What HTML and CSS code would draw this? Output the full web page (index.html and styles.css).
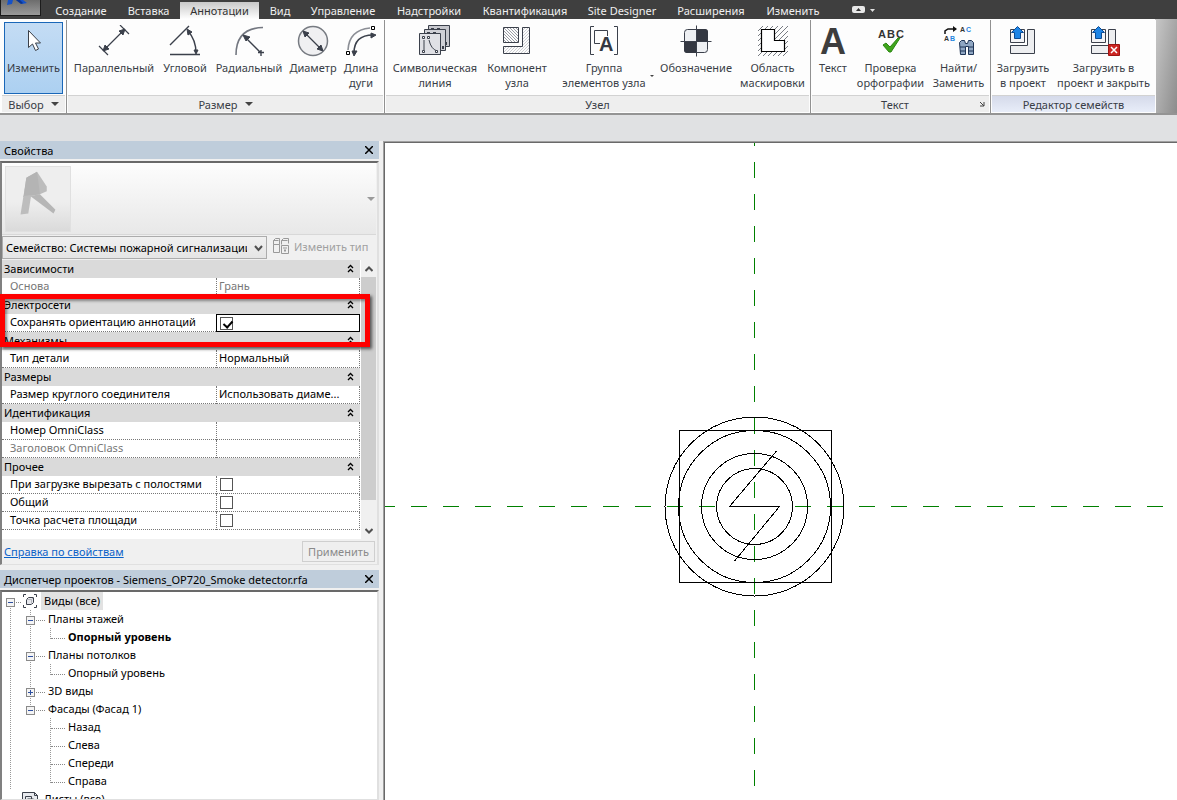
FILE: index.html
```html
<!DOCTYPE html>
<html lang="ru">
<head>
<meta charset="utf-8">
<title>Siemens_OP720_Smoke detector.rfa</title>
<link rel="stylesheet" href="styles.css">
</head>
<body>
<div class="app">
  <header class="topbar">
    <button class="app-button" aria-label="Меню приложения">
      <svg width="39" height="15" viewBox="0 0 39 15"><path d="M7 0h5l-1 4-5 1zM15 0h7l4 3-5 1z" fill="#1652c8"/><path d="M15 0h4l3 3-2 1z" fill="#0b3592"/></svg>
    </button>
    <nav class="tabs">
      <button class="tab">Создание</button>
      <button class="tab">Вставка</button>
      <button class="tab tab-active">Аннотации</button>
      <button class="tab">Вид</button>
      <button class="tab">Управление</button>
      <button class="tab">Надстройки</button>
      <button class="tab">Квантификация</button>
      <button class="tab">Site Designer</button>
      <button class="tab">Расширения</button>
      <button class="tab">Изменить</button>
    </nav>
    <button class="ribbon-toggle" aria-label="Свернуть ленту">
      <svg width="24" height="8" viewBox="0 0 24 8"><rect x="0" y="0" width="13" height="7" rx="2" fill="#e8e8e8"/><path d="M4 5h5L6.500 2z" fill="#333"/><path d="M18 3h5l-2.500 3z" fill="#e0e0e0"/></svg>
    </button>
  </header>

  <section class="ribbon">
    <div class="group group-select">
      <div class="tools">
        <button class="tool tool-active">
          <svg class="icon" viewBox="0 0 32 32"><path d="M10.500 5.500v17l4-3.500 3 6.500 3-1.500-3-6h5z" fill="#fff" stroke="#3b4049"/></svg>
          <span>Изменить</span>
        </button>
      </div>
      <button class="group-title">Выбор <i class="caret"></i></button>
    </div>

    <div class="group group-dimension">
      <div class="tools">
        <button class="tool">
          <svg class="icon" viewBox="0 0 32 32" fill="none" stroke="#3b404b"><path d="M1 21l9 9M22 0l9 9M6 25L26 5" stroke-width="1.200"/><path d="M5 26l2-6 4 4zM27 4l-6 2 4 4z" fill="#3b404b"/></svg>
          <span>Параллельный</span>
        </button>
        <button class="tool">
          <svg class="icon" viewBox="0 0 32 32" fill="none" stroke="#3b404b"><path d="M1 20L20 1M1 29.500h30M19 6q8 9 8 22" stroke-width="1.400"/><path d="M18 4l5 3-4 3zM27 29l-2-4h4z" fill="#3b404b"/></svg>
          <span>Угловой</span>
        </button>
        <button class="tool">
          <svg class="icon" viewBox="0 0 32 32" fill="none" stroke="#3b404b"><path d="M3 30Q3 3 30 2.500" stroke="#737780" stroke-width="1.600"/><path d="M12 12l15 15M25 27.500h6M28 25v6" stroke-width="1.400"/><path d="M10 10l7 2-4 4z" fill="#3b404b"/></svg>
          <span>Радиальный</span>
        </button>
        <button class="tool">
          <svg class="icon" viewBox="0 0 32 32" fill="none" stroke="#3b404b"><circle cx="16" cy="16" r="14.500" fill="#f0f0f2" stroke="#777b82" stroke-width="1.500"/><path d="M9 9l14 14" stroke-width="1.300"/><path d="M6 6l6 2-4 4zM26 26l-6-2 4-4z" fill="#3b404b"/></svg>
          <span>Диаметр</span>
        </button>
        <button class="tool">
          <svg class="icon" viewBox="0 0 32 32" fill="none" stroke="#3b404b"><path d="M3 25Q4 5 25 3" stroke="#8b8e95" stroke-width="1.600"/><path d="M9 28Q9 10 28 10" stroke-width="1.500"/><path d="M9 31l-2-5h5zM31 10l-5-2v5z" fill="#3b404b"/><path d="M1.500 26.500h3v3h-3zM26.500 1.500h3v3h-3z" fill="#fff" stroke="#000"/></svg>
          <span>Длина дуги</span>
        </button>
      </div>
      <button class="group-title">Размер <i class="caret"></i></button>
    </div>

    <div class="group group-detail">
      <div class="tools">
        <button class="tool">
          <svg class="icon" viewBox="0 0 32 32" fill="none" stroke="#3b404b"><path d="M9.500.5h21v21h-21z" fill="#c6c7cd"/><path d="M5.500 4.500h21v21h-21z" fill="#cfd0d6"/><path d="M12 4h3M18 4h3M8 8h3M14 8h3M27 17v3M24 21v3" stroke-width="2"/><path d="M.5 8.500h21v21H.5z" fill="#dfe0e5"/><path d="M5 15v10M10 15q2 9 8 11"/><path d="M3.500 11.500h2v2h-2zM8.500 11.500h2v2h-2zM3.500 25.500h2v2h-2zM16.500 25.500h2v2h-2z" fill="#fff"/></svg>
          <span>Символическая линия</span>
        </button>
        <button class="tool">
          <svg class="icon" viewBox="0 0 32 32"><defs><pattern id="dots" width="3" height="3" patternUnits="userSpaceOnUse"><path d="M0 0h1v1H0zM1 1h1v1H1zM2 2h1v1H2z" fill="#9b9ea6"/></pattern><pattern id="lightdots" width="3" height="3" patternUnits="userSpaceOnUse"><path d="M2 0h1v1H2zM1 1h1v1H1zM0 2h1v1H0z" fill="#cdced2"/></pattern></defs><g stroke="#3b404b"><path d="M2.500 2.500h15v15h-15z" fill="url(#dots)"/><path d="M21.500 2.500h7v26h-26v-7h19z" fill="url(#lightdots)"/></g></svg>
          <span>Компонент узла</span>
        </button>
        <button class="tool">
          <svg class="icon" viewBox="0 0 32 32"><path d="M6 1.500H2.500v28H6M26 1.500h3.500v28H26" fill="none" stroke="#3b404b"/><path d="M19.500 11V5.500h-13v13H12" fill="none" stroke="#3b404b"/><text x="11" y="26" class="glyph-a">A</text></svg>
          <span>Группа<br>элементов узла</span><i class="caret caret-small"></i>
        </button>
        <button class="tool">
          <svg class="icon" viewBox="0 0 32 32"><rect x="4.500" y="4.500" width="23" height="23" rx="3" fill="#eef0f3" stroke="#3b404b"/><path d="M16 4h9q3 0 3 3v9H16zM4 16h12v12H7q-3 0-3-3z" fill="#343842"/><path d="M.5 16.500h31M16.500.5v31" stroke="#3b404b"/></svg>
          <span>Обозначение</span>
        </button>
        <button class="tool">
          <svg class="icon" viewBox="0 0 32 32"><path d="M1 6l5-5M1 11L11 1M1 16L16 1M1 21L21 1M1 26L26 1M1 31L31 1M6 31L31 6M11 31l20-20M16 31l15-15M21 31l10-10M26 31l5-5" stroke="#555a63" stroke-width=".8"/><path d="M4.500 4.500h13v11h10v11h-23z" fill="#fff" stroke="#000" stroke-width="1.200"/></svg>
          <span>Область маскировки</span>
        </button>
      </div>
      <div class="group-title">Узел</div>
    </div>

    <div class="group group-text">
      <div class="tools">
        <button class="tool">
          <svg class="icon" viewBox="0 0 32 32"><text x="16" y="29" class="glyph-big">A</text></svg>
          <span>Текст</span>
        </button>
        <button class="tool">
          <svg class="icon" viewBox="0 0 32 32"><text x="3" y="13" class="glyph-abc">A<tspan dx="1">B</tspan><tspan dx="1">C</tspan></text><path d="M8 20l3-2 4 4 8-9h2l-9 14h-2z" fill="#3fa51c" stroke="#2b8611"/></svg>
          <span>Проверка орфографии</span>
        </button>
        <button class="tool">
          <svg class="icon" viewBox="0 0 32 32"><path d="M2 9V6l3-2h8" fill="none" stroke="#111" stroke-width="1.500"/><path d="M10 1l4 3-4 3z" fill="#111"/><text x="17" y="7" class="glyph-tiny">A<tspan dx="1" class="glyph-blue">C</tspan></text><text x="1" y="16" class="glyph-tiny">A<tspan dx="1" class="glyph-blue">B</tspan></text><path d="M16.500 17.500l2-2h3l1 3h2l1-3h3l2 2v12h-5v-8h-3v8h-5z" fill="#8fa6c2" stroke="#1f3556"/><path d="M17 22h5M25 22h5M17 26h5M25 26h5" stroke="#1f3556"/></svg>
          <span>Найти/ Заменить</span>
        </button>
      </div>
      <div class="group-title"><span class="group-caption">Текст</span><svg width="6" height="6" viewBox="0 0 6 6"><path d="M1 1l4 4M5 1v4H1" fill="none" stroke="#444"/></svg></div>
    </div>

    <div class="group group-family">
      <div class="tools">
        <button class="tool">
          <svg class="icon" viewBox="0 0 32 32"><path d="M20.500 4.500h7v24h-24v-8h17z" fill="#edeef0" stroke="#3b404b"/><path d="M3.500 4.500h14v13h-14z" fill="#f4f4f6" stroke="#3b404b"/><path d="M10.500 1.500l6 6h-3v6h-6v-6h-3z" fill="#1e85e6" stroke="#0d4c94"/></svg>
          <span>Загрузить в&nbsp;проект</span>
        </button>
        <button class="tool">
          <svg class="icon" viewBox="0 0 32 32"><path d="M20.500 4.500h7v24h-24v-8h17z" fill="#edeef0" stroke="#3b404b"/><path d="M3.500 4.500h14v13h-14z" fill="#f4f4f6" stroke="#3b404b"/><path d="M10.500 1.500l6 6h-3v6h-6v-6h-3z" fill="#1e85e6" stroke="#0d4c94"/><path d="M20.500 19.500h11v11h-11z" fill="#cc2522" stroke="#9d1512"/><path d="M23 22l6 6M29 22l-6 6" stroke="#fff" stroke-width="1.500"/></svg>
          <span>Загрузить в<br>проект и закрыть</span>
        </button>
      </div>
      <div class="group-title">Редактор семейств</div>
    </div>
  </section>

  <div class="options-bar"></div>

  <main class="workspace">
    <aside class="sidebar">
      <section class="palette">
        <header class="palette-head">
          <h2>Свойства</h2>
          <button class="close" aria-label="Закрыть"><svg width="8" height="8" viewBox="0 0 8 8"><path d="M0 0l8 8M8 0L0 8" stroke="#000" stroke-width="1.500"/></svg></button>
        </header>
        <div class="palette-body">
          <button class="type-selector" aria-label="Выбор типа">
            <svg class="thumb" viewBox="0 0 66 66"><path d="M21 11l11-6 10 15v5l-7 3L18 31z" fill="#bcbcbc"/><path d="M21 11l11-6 3 23-17 3z" fill="#b4b4b4"/><path d="M18 30l8-1-3 19-8 1z" fill="#bdbdbd"/><path d="M25 30l10-2 16 16-2 4z" fill="#b6b6b6"/></svg>
            <i class="caret caret-gray"></i>
          </button>
          <div class="type-row">
            <select aria-label="Семейство"><option>Семейство: Системы пожарной сигнализации</option></select>
            <button class="edit-type" disabled>
              <svg width="16" height="16" viewBox="0 0 16 16" fill="none" stroke="#999"><path d="M.5 2.500l2-2h4v6h-6zM.5 6.500v8h6v-8M8.500 2.500l2-2h5v5M8.500 2.500v4M8.500 7.500h7v8h-7zM10 10h4M.5 2.500h5M8.500 2.500h6"/><path d="M11 12.500h2" stroke-width="2"/></svg>
              Изменить тип
            </button>
          </div>
          <div class="grid-area">
            <table class="props">
              <colgroup><col class="col-name"><col></colgroup>
              <tr class="cat"><th>Зависимости</th><td><svg class="fold"><use href="#fold"/></svg></td></tr>
              <tr class="muted"><th>Основа</th><td>Грань</td></tr>
              <tr class="cat"><th>Электросети</th><td><svg class="fold"><use href="#fold"/></svg></td></tr>
              <tr><th><label for="keep">Сохранять ориентацию аннотаций</label></th><td class="editing"><input type="checkbox" id="keep" checked></td></tr>
              <tr class="cat"><th>Механизмы</th><td><svg class="fold"><use href="#fold"/></svg></td></tr>
              <tr><th>Тип детали</th><td>Нормальный</td></tr>
              <tr class="cat"><th>Размеры</th><td><svg class="fold"><use href="#fold"/></svg></td></tr>
              <tr><th>Размер круглого соединителя</th><td>Использовать диаме...</td></tr>
              <tr class="cat"><th>Идентификация</th><td><svg class="fold"><use href="#fold"/></svg></td></tr>
              <tr><th>Номер OmniClass</th><td></td></tr>
              <tr class="muted"><th>Заголовок OmniClass</th><td></td></tr>
              <tr class="cat"><th>Прочее</th><td><svg class="fold"><use href="#fold"/></svg></td></tr>
              <tr><th><label for="cut">При загрузке вырезать с полостями</label></th><td><input type="checkbox" id="cut"></td></tr>
              <tr><th><label for="shared">Общий</label></th><td><input type="checkbox" id="shared"></td></tr>
              <tr><th><label for="area">Точка расчета площади</label></th><td><input type="checkbox" id="area"></td></tr>
            </table>
            <div class="scrollbar">
              <svg width="8" height="6" viewBox="0 0 8 6"><path d="M.5 5L4 1.500 7.500 5" fill="none" stroke="#505050" stroke-width="2"/></svg>
              <div class="scroll-thumb"></div>
              <svg width="8" height="6" viewBox="0 0 8 6"><path d="M.5 1L4 4.500 7.500 1" fill="none" stroke="#505050" stroke-width="2"/></svg>
            </div>
            <div class="callout"></div>
          </div>
          <footer class="palette-foot">
            <a href="#">Справка по свойствам</a>
            <button class="apply" disabled>Применить</button>
          </footer>
        </div>
      </section>

      <section class="palette palette-browser">
        <header class="palette-head">
          <h2>Диспетчер проектов - Siemens_OP720_Smoke detector.rfa</h2>
          <button class="close" aria-label="Закрыть"><svg width="8" height="8" viewBox="0 0 8 8"><path d="M0 0l8 8M8 0L0 8" stroke="#000" stroke-width="1.500"/></svg></button>
        </header>
        <div class="palette-body tree-body">
          <ul class="tree">
            <li class="root">
              <div class="node"><button class="box" aria-label="Свернуть"></button><i class="link"></i>
                <svg class="node-icon" width="14" height="14" viewBox="0 0 14 14" fill="none" stroke="#3b404b"><path d="M3 .5H.5V3M11 .5h2.500V3M3 13.500H.5V11M11 13.500h2.500V11"/><path d="M3.500 5.500l2-2h5v5l-2 2h-5z" fill="#e6e7ec"/><path d="M3.500 5.500h5v5M8.500 5.500l2-2" stroke="#b5b7bd"/></svg>
                <span class="selected">Виды (все)</span></div>
              <ul>
                <li><div class="node"><button class="box" aria-label="Свернуть"></button><i class="link"></i><span>Планы этажей</span></div>
                  <ul><li><div class="node"><i class="link"></i><b>Опорный уровень</b></div></li></ul></li>
                <li><div class="node"><button class="box" aria-label="Свернуть"></button><i class="link"></i><span>Планы потолков</span></div>
                  <ul><li><div class="node"><i class="link"></i><span>Опорный уровень</span></div></li></ul></li>
                <li><div class="node"><button class="box box-plus" aria-label="Развернуть"></button><i class="link"></i><span>3D виды</span></div></li>
                <li><div class="node"><button class="box" aria-label="Свернуть"></button><i class="link"></i><span>Фасады (Фасад 1)</span></div>
                  <ul>
                    <li><div class="node"><i class="link"></i><span>Назад</span></div></li>
                    <li><div class="node"><i class="link"></i><span>Слева</span></div></li>
                    <li><div class="node"><i class="link"></i><span>Спереди</span></div></li>
                    <li><div class="node"><i class="link"></i><span>Справа</span></div></li>
                  </ul></li>
              </ul>
            </li>
            <li class="root"><div class="node node-sheets">
              <svg class="node-icon" width="16" height="14" viewBox="0 0 16 14" fill="#e8eaee" stroke="#3b404b"><path d="M.5 12.500V.5h12l3 3v9z"/><path d="M12.500.5v3h3M3.500 9.500v-5h6v5zM5.500 12v-5h6v5" fill="none"/></svg>
              <span class="sheet-label">Листы (все)</span></div></li>
          </ul>
        </div>
      </section>
    </aside>

    <section class="canvas">
      <svg class="drawing" shape-rendering="crispEdges" fill="none" stroke="#000">
        <g stroke="#008000" stroke-dasharray="16 16"><path d="M369.500 -13V1600"/><path d="M-6 363.500H3000"/></g>
        <rect x="294.500" y="287.500" width="152" height="152"/>
        <circle cx="369.500" cy="363.500" r="89.500"/>
        <circle cx="369.500" cy="363.500" r="76"/>
        <circle cx="369.500" cy="363.500" r="53"/>
        <circle cx="369.500" cy="363.500" r="38"/>
        <path d="M391.500 308L344.500 363.500H394.500L349.500 418"/>
      </svg>
    </section>
  </main>
</div>
<svg class="symbols" width="0" height="0"><symbol id="fold" viewBox="0 0 7 9"><path d="M1 4l2.500-2.500L6 4M1 8l2.500-2.500L6 8" fill="none" stroke="#000" stroke-width="1.300"/></symbol></svg>
</body>
</html>
```

FILE: styles.css
```css
* { box-sizing: border-box; }

body {
  margin: 0;
  font: 11px/15px "Noto Sans", "Open Sans", sans-serif;
  color: #000;
  background: #e0e1e3;
}

button, select, input {
  margin: 0;
  padding: 0;
  border: 0;
  font: inherit;
  color: inherit;
  background: none;
}

ul { margin: 0; padding: 0; list-style: none; }
svg { display: block; flex: none; }
.symbols { position: absolute; }

.app {
  display: flex;
  flex-direction: column;
  height: 100vh;
  overflow: hidden;
}

/* Top bar */
.topbar {
  display: flex;
  height: 19px;
  flex: none;
  background: #3f3f3f;
}

.app-button {
  display: flex;
  width: 41px;
  height: 16px;
  margin-right: 4px;
  border: 1px solid #1c1c1c;
  border-top: 0;
  background: linear-gradient(#6d6d6d, #9a9a9a);
}

.tabs {
  display: grid;
  grid-template-columns: 72px 63px 80px 40px 86px 86px 106px 88px 90px 74px;
}

.tab {
  padding-top: 1px;
  color: #f0f0f0;
  white-space: nowrap;
}

.tab-active {
  margin: 2px 1px 0 0;
  padding: 0;
  color: #333;
  background: linear-gradient(#c9c9c9, #fff);
}

.ribbon-toggle { margin-left: 22px; padding-top: 1px; }

/* Ribbon */
.ribbon {
  display: flex;
  flex: none;
  padding-top: 1px;
  border-bottom: 2px solid #949494;
  color: #393d46;
  background: linear-gradient(100deg, #c8c8c8, #8c8c8c) right / 22px 100% no-repeat #fff;
}

.group {
  display: flex;
  flex-direction: column;
  padding: 0 1px;
  border-right: 1px solid #919191;
  background: #fdfdfd;
}

.tools { display: flex; flex: 1; padding: 0 2px; }

.tool {
  position: relative;
  display: flex;
  flex-direction: column;
  align-items: center;
  height: 75px;
  padding-top: 5px;
}

.icon { width: 32px; height: 32px; margin-bottom: 3px; }

.group-select { width: 67px; padding-left: 2px; }
.group-select .tool { width: 60px; height: 72px; margin-top: 2px; padding-top: 2px; }
.tool-active { border: 1px solid #1a67b8; background: linear-gradient(#c4dcf4, #acd0f1); }
.group-dimension { width: 318px; }
.group-dimension .tools { display: grid; grid-template-columns: 88px 54px 74px 54px 42px; }
.group-detail { width: 426px; }
.group-detail .tools { display: grid; grid-template-columns: 94px 70px 104px 80px 73px; }
.group-text { width: 180px; }
.group-text .tools { display: grid; grid-template-columns: 40px 75px 61px; padding: 0 1px; }
.group-family { width: 165px; border-right: 0; }
.group-family .tools { display: grid; grid-template-columns: 60px 101px; padding: 0 1px; }

.group-title {
  display: flex;
  align-items: center;
  justify-content: center;
  gap: 7px;
  height: 17px;
  margin-bottom: 1px;
  border-top: 1px solid #d2d2d2;
  background: #eee;
}

.group-text .group-title { padding-right: 4px; }
.group-caption { flex: 1; padding-left: 6px; text-align: center; }
.group-family .group-title { background: linear-gradient(#d5daea, #e8edf9); }

.caret {
  border: 4px solid transparent;
  border-top-color: #444;
  border-bottom: 0;
}

.caret-small {
  position: absolute;
  right: 2px;
  top: 55px;
  border-width: 2px;
  border-bottom: 0;
}

.caret-gray { border-top-color: #9a9a9a; }

.glyph-a { font: bold 20px "Liberation Sans", sans-serif; fill: #343842; }
.glyph-big { font: bold 36px/32px "Liberation Sans", sans-serif; fill: #3d3d3d; text-anchor: middle; }
.glyph-abc { font: bold 11px "Liberation Sans", sans-serif; fill: #333; }
.glyph-tiny { font: bold 7px "Liberation Sans", sans-serif; fill: #333; }
.glyph-tiny .glyph-blue { fill: #1f86e0; }

.options-bar { height: 26px; flex: none; }

/* Workspace */
.workspace {
  display: flex;
  flex: 1;
  min-height: 0;
  background: #f0f0f0;
}

.sidebar {
  display: flex;
  flex-direction: column;
  width: 383px;
  flex: none;
  padding-right: 4px;
}

.palette { display: flex; flex-direction: column; }
.palette-browser { flex: 1; min-height: 0; margin-top: 5px; }

.palette-head {
  display: flex;
  align-items: center;
  justify-content: space-between;
  height: 18px;
  flex: none;
  margin-bottom: 2px;
  padding: 0 6px 0 4px;
  background: #bfcddb;
}

.palette-head h2 { margin: 0; font-size: 11px; font-weight: normal; }

.palette-body {
  padding-right: 1px;
  border: 1px solid #e0e0e0;
  border-top: 2px solid #696969;
  border-left: 2px solid #808080;
  border-right-width: 2px;
}

.type-selector {
  display: flex;
  align-items: center;
  justify-content: space-between;
  width: 100%;
  height: 72px;
  padding: 0 1px 0 3px;
  border-bottom: 1px solid #d8d8d8;
  background: linear-gradient(#fdfdfd, #e8e8e8);
}

.thumb {
  width: 66px;
  height: 66px;
  border: 1px solid #e0e0e0;
  background: linear-gradient(#eee 55%, #dadada);
}

.type-row { display: flex; height: 25px; padding-top: 1px; }

.type-row select {
  width: 265px;
  height: 23px;
  padding: 0 19px 0 3px;
  border: 1px solid #acacac;
  border-radius: 0;
  appearance: none;
  background: url("data:image/svg+xml,%3Csvg xmlns='http://www.w3.org/2000/svg' width='9' height='7'%3E%3Cpath d='M1 1l3.500 4L8 1' fill='none' stroke='%23505050' stroke-width='2'/%3E%3C/svg%3E") 251px 8px no-repeat,
    linear-gradient(#f0f0f0, #e5e5e5);
}

.edit-type {
  display: flex;
  align-items: center;
  gap: 5px;
  height: 20px;
  margin-left: 6px;
  color: #a0a0a0;
}

.grid-area {
  position: relative;
  display: flex;
  justify-content: space-between;
  height: 279px;
  background: #fff;
}

.props {
  width: 358px;
  height: 270px;
  table-layout: fixed;
  border-spacing: 0;
  background: #fff;
}

.col-name { width: 214px; }

.props th, .props td {
  height: 18px;
  padding: 0 0 2px 2px;
  overflow: hidden;
  border-bottom: 1px dotted #777;
  font-weight: normal;
  line-height: 15px;
  text-align: left;
  white-space: nowrap;
}

.props th { padding-left: 8px; }
.props td { border-left: 1px dotted #777; border-right: 1px dotted #777; }
.props .cat th, .props .cat td { padding: 0 0 1px; border: 0; background: #dadada; }
.props .cat th { padding-left: 2px; }
.props .muted { color: #777; }
.props .editing { padding: 0; border: 1px solid #000; }
.fold { width: 7px; height: 9px; margin-left: auto; margin-right: 6px; }

.props input {
  display: block;
  width: 13px;
  height: 13px;
  margin: 2px 0 0 1px;
  border: 1px solid #555;
  appearance: none;
  background: #fff;
}

.props .editing input { margin: 1px 0 0 3px; }

.props input:checked::before {
  content: "";
  display: block;
  width: 4px;
  height: 7px;
  margin: 1px 0 0 4px;
  border: solid #000;
  border-width: 0 2px 2px 0;
  transform: rotate(42deg);
}

.scrollbar {
  display: flex;
  flex-direction: column;
  align-items: center;
  justify-content: space-between;
  width: 15px;
  padding: 6px 0 5px;
  background: #f0f0f0;
}

.scroll-thumb { width: 15px; height: 223px; margin: 5px 0 auto; background: #cdcdcd; }

.callout {
  position: absolute;
  left: -2px;
  top: 34px;
  width: 370px;
  height: 53px;
  border: 5px solid #fe0000;
  box-shadow: 2px 2px 3px rgba(0, 0, 0, .6), inset 2px 2px 3px rgba(0, 0, 0, .4);
  pointer-events: none;
}

.palette-foot {
  display: flex;
  justify-content: space-between;
  align-items: center;
  height: 25px;
  padding: 0 1px 0 2px;
}

.palette-foot a { color: #0b62c8; }

.apply {
  width: 73px;
  height: 21px;
  border: 1px solid #cfcfcf;
  color: #8a8a8a;
  background: #efefef;
}

/* Project browser */
.tree-body { flex: 1; min-height: 0; overflow: hidden; background: #fff; }

.tree li {
  background: repeating-linear-gradient(#999 0 1px, transparent 1px 2px) no-repeat;
  background-size: 1px 100%;
}

.tree .root { background-position: 8px 10px; }
.tree .root .node:first-child { padding-left: 4px; }
.tree .root > ul > li { background-position: 28px 0; }
.tree .root > ul > li:last-child { background-size: 1px 9px; }
.tree .root > ul > li > .node:first-child { padding-left: 24px; }
.tree .root > ul > li > ul > li { background-position: 48px 0; }
.tree .root > ul > li > ul > li:last-child { background-size: 1px 11px; }
.tree .root > ul > li > ul .node:first-child { padding-left: 48px; }

.node { display: flex; align-items: center; height: 18px; white-space: nowrap; }
.node b, .node span { line-height: 18px; }

.link { width: 8px; margin: 3px 3px 0 1px; border-top: 1px dotted #888; }
.tree ul .link { width: 9px; }
.tree ul ul .link { width: 14px; }
.root > .node > .link { width: 5px; margin-right: 2px; }

.box {
  width: 9px;
  height: 9px;
  flex: none;
  margin-top: 3px;
  border: 1px solid #8a8a8a;
  background: linear-gradient(#2d4fa0, #2d4fa0) center / 5px 1px no-repeat, #f4f4f4;
}

.box-plus {
  background: linear-gradient(#2d4fa0, #2d4fa0) center / 5px 1px no-repeat,
    linear-gradient(#2d4fa0, #2d4fa0) center / 1px 5px no-repeat, #f4f4f4;
}

.selected { margin-left: 4px; padding: 0 3px; background: #e2e2e2; }
.tree .root .node-sheets:first-child { padding-left: 20px; }
.sheet-label { margin-left: 6px; }

/* Drawing area */
.canvas {
  flex: 1;
  min-width: 0;
  overflow: hidden;
  margin: 1px 0 0 1px;
  border-top: 1px solid #696969;
  border-left: 1px solid #696969;
  box-shadow: 0 0 0 1px #a0a0a0;
  background: #fff;
}

.drawing { width: 100%; height: 100%; }
```
